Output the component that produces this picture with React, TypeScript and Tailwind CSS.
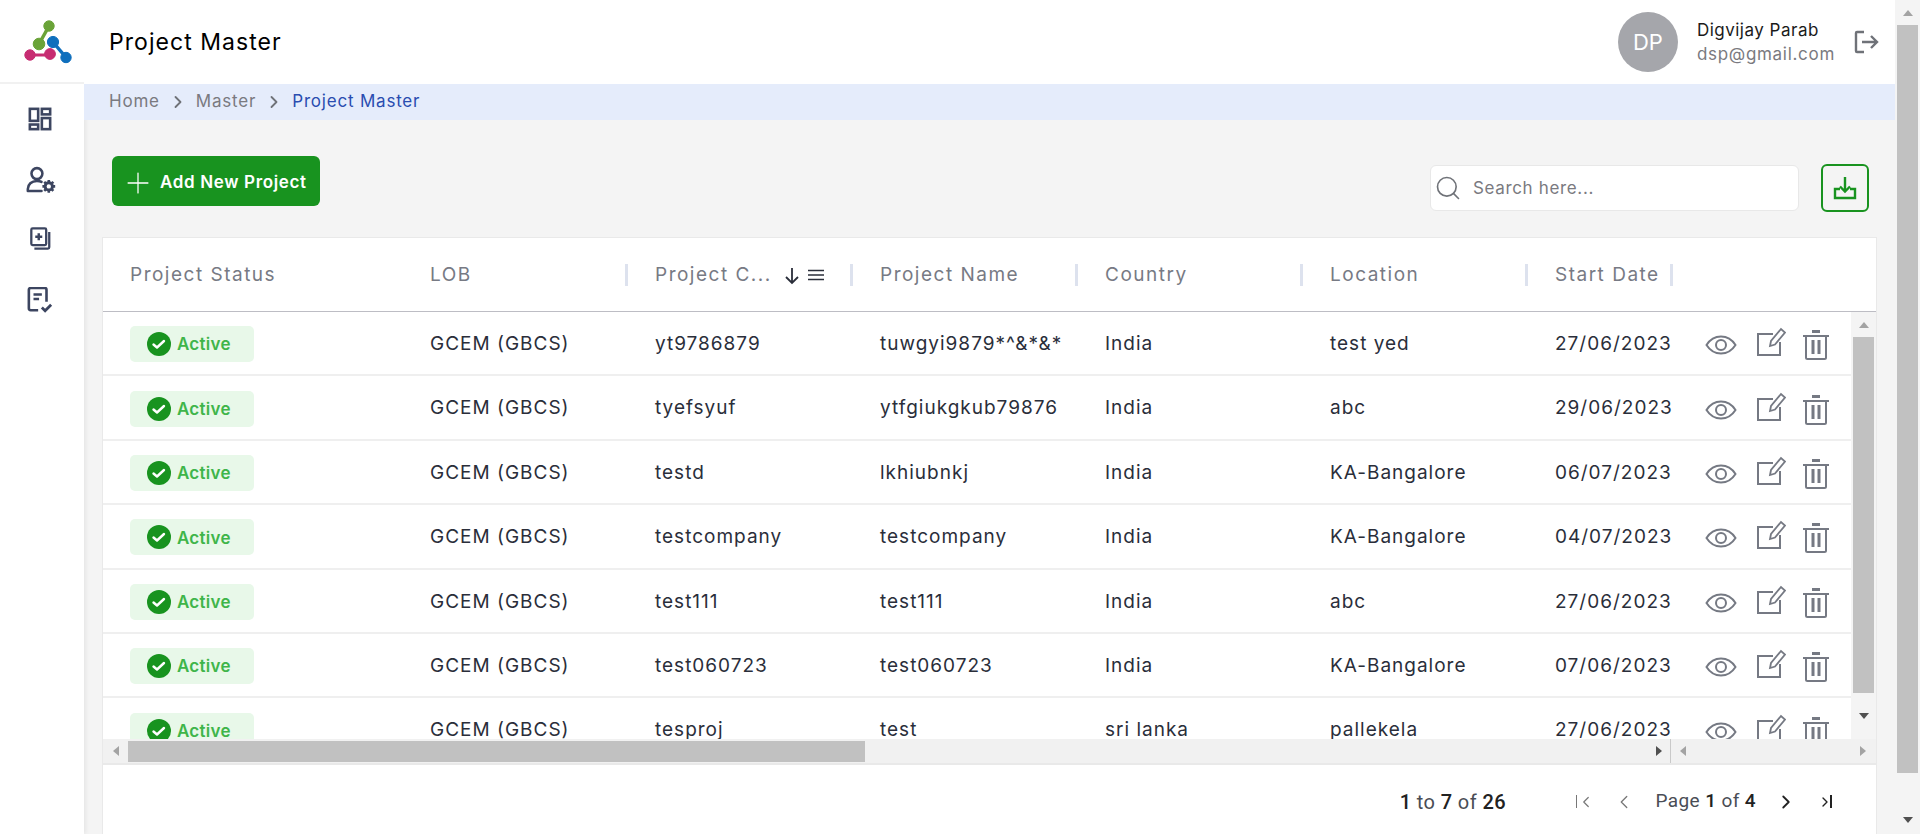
import { ChevronLeft, ChevronRight, Plus, Search } from "lucide-react";

const columns = "grid-cols-[297px_228px_225px_225px_225px_225px_145px_178px]";
const font = "font-['Inter','Noto_Sans',sans-serif]";

const projects = [
  ["yt9786879", "tuwgyi9879*^&*&*", "India", "test yed", "27/06/2023"],
  ["tyefsyuf", "ytfgiukgkub79876", "India", "abc", "29/06/2023"],
  ["testd", "lkhiubnkj", "India", "KA-Bangalore", "06/07/2023"],
  ["testcompany", "testcompany", "India", "KA-Bangalore", "04/07/2023"],
  ["test111", "test111", "India", "abc", "27/06/2023"],
  ["test060723", "test060723", "India", "KA-Bangalore", "07/06/2023"],
  ["tesproj", "test", "sri lanka", "pallekela", "27/06/2023"],
];

function Logo() {
  return (
    <svg width="48" height="44" viewBox="24 20 48 44">
      <g fill="#6aa338" stroke="#6aa338">
        <circle cx="49" cy="26" r="5.2" />
        <circle cx="39" cy="44" r="5.800" />
        <path d="M49 26 39 44" strokeWidth="3.5" />
      </g>
      <g fill="#c72c72" stroke="#c72c72">
        <circle cx="30" cy="55" r="5.200" />
        <circle cx="50" cy="54" r="5.400" />
        <path d="M30 55h20" strokeWidth="3" />
      </g>
      <g fill="#0f6fbd" stroke="#0f6fbd">
        <circle cx="53" cy="42" r="5.600" />
        <circle cx="66" cy="57.500" r="5.200" />
        <path d="M53 42 66 57.500" strokeWidth="3.500" />
      </g>
    </svg>
  );
}

function DashIcon() {
  return (
    <svg width="24" height="24" viewBox="0 0 26 26" fill="none" stroke="#3c4560" strokeWidth="2.800">
      <rect x="2" y="2" width="9" height="13" />
      <rect x="15" y="2" width="9" height="6" />
      <rect x="15" y="12" width="9" height="12" />
      <rect x="2" y="19" width="9" height="5" />
    </svg>
  );
}

function UserGearIcon() {
  return (
    <svg width="31" height="28" viewBox="0 0 34 30" fill="none" stroke="#3c4560" strokeWidth="2.800">
      <circle cx="12" cy="8" r="6" />
      <path d="M2 27v-2c0-5 4-9 10-9 2 0 4 .4 5 1M2 27h15" strokeLinecap="round" />
      <circle cx="25" cy="22" r="4" strokeWidth="3.200" />
      <path d="M25 15v3M25 26v3M18 22h3M29 22h3M20 17l2 2M28 25l2 2M30 17l-2 2M22 25l-2 2" strokeWidth="2.800" />
    </svg>
  );
}

function AddDocIcon() {
  return (
    <svg width="21" height="23" viewBox="0 0 24 26" fill="none" stroke="#3c4560" strokeWidth="2.600">
      <rect x="1.500" y="1.500" width="17" height="19" rx="1.500" />
      <path d="M22 5.500V23a1.500 1.500 0 0 1-1.500 1.500H5" />
      <path d="M10 7v8M6 11h8" strokeWidth="2.800" />
    </svg>
  );
}

function ChecklistIcon() {
  return (
    <svg width="26" height="26" viewBox="0 0 28 28" fill="none" stroke="#3c4560" strokeWidth="2.800">
      <path d="M12 25H4a2 2 0 0 1-2-2V3a2 2 0 0 1 2-2h15a2 2 0 0 1 2 2v13" />
      <path d="M7 8h9M7 13h6" />
      <path d="m16 22 3.500 3.500L26 19" strokeWidth="3" />
    </svg>
  );
}

function LogoutIcon() {
  return (
    <svg width="26" height="24" viewBox="0 0 26 24" fill="none" stroke="#6f7278" strokeWidth="2.400">
      <path d="M10 2H3a1 1 0 0 0-1 1v18a1 1 0 0 0 1 1h7" />
      <path d="M8 12h15M17 6l6 6-6 6" />
    </svg>
  );
}

function DownloadIcon() {
  return (
    <svg width="24" height="24" viewBox="0 0 24 24" fill="none" stroke="#18931f" strokeWidth="2.400">
      <path d="M12 1v14M7 10.500l5 5 5-5" />
      <path d="M7 13H2v9h20v-9h-5" />
    </svg>
  );
}

function ActionIcons() {
  return (
    <div className="flex items-center pl-[32px] pt-[2px]">
      <svg width="32" height="20" viewBox="0 0 32 20" fill="none" stroke="#757983" strokeWidth="2">
        <path d="M1.500 10C5 4.500 10 1.500 16 1.500S27 4.500 30.500 10C27 15.500 22 18.500 16 18.500S5 15.500 1.500 10Z" />
        <circle cx="16" cy="10" r="5" />
      </svg>
      <svg className="ml-[19px] -mt-[6px]" width="30" height="30" viewBox="0 0 30 30" fill="none" stroke="#757983" strokeWidth="2">
        <path d="M17 7H2v21h22V15" />
        <path d="M14 19l1-5L25 2l4 3.500-10 12Z" strokeWidth="1.800" />
      </svg>
      <svg className="ml-[17px]" width="26" height="30" viewBox="0 0 26 30" fill="none" stroke="#757983" strokeWidth="2">
        <path d="M0 6h26" />
        <path d="M9 1.500h8" strokeWidth="3" />
        <path d="M3 6v21.500a1.500 1.500 0 0 0 1.500 1.500h17a1.500 1.500 0 0 0 1.500-1.500V6" />
        <path d="M10 10v14M16 10v14" strokeWidth="3" />
      </svg>
    </div>
  );
}

function StatusPill() {
  return (
    <div className="ml-[27px] flex h-[36px] w-[124px] items-center rounded-[5px] bg-[#e8f8e9] pl-[17px]">
      <svg width="24" height="24" viewBox="0 0 24 24">
        <circle cx="12" cy="12" r="12" fill="#18931f" />
        <path d="m6.500 12.500 3.500 3 7-6.500" fill="none" stroke="#fff" strokeWidth="2.400" strokeLinecap="round" strokeLinejoin="round" />
      </svg>
      <span className="ml-[6px] pt-[2px] text-[17px] font-semibold tracking-[0.25px] text-[#3fb54a]">Active</span>
    </div>
  );
}

function HeaderCell({ label, first, sort }: { label: string; first?: boolean; sort?: boolean }) {
  return (
    <div className={`flex items-center ${first ? "pl-[27px]" : "justify-between"}`}>
      <div className={`flex items-center pt-[2px] ${first ? "" : label === "LOB" ? "pl-[30px]" : "pl-[27px]"}`}>
        <span className="whitespace-nowrap tracking-[1.5px]">{label}</span>
        {sort && (
          <span className="ml-[12px] flex items-center gap-[8px]">
            <svg width="16" height="18" viewBox="0 0 16 18" fill="none" stroke="#2a2e3a" strokeWidth="1.800">
              <path d="M8 1v15M2 10l6 6 6-6" />
            </svg>
            <svg className="-mt-[2px]" width="16" height="12" viewBox="0 0 16 12" fill="none" stroke="#2a2e3a" strokeWidth="1.500">
              <path d="M0 1.500h16M0 6h16M0 10.500h16" />
            </svg>
          </span>
        )}
      </div>
      {!first && <div className="h-[22px] w-[3px] shrink-0 bg-[#dde2ee]" />}
    </div>
  );
}

function Arrow({ dir, color = "#a3a3a3" }: { dir: "up" | "down" | "left" | "right"; color?: string }) {
  const points = { up: "0,6 5,0 10,6", down: "0,0 10,0 5,6", left: "6,0 6,10 0,5", right: "0,0 0,10 6,5" }[dir];
  const horizontal = dir === "left" || dir === "right";
  return (
    <svg width={horizontal ? 6 : 10} height={horizontal ? 10 : 6} viewBox={horizontal ? "0 0 6 10" : "0 0 10 6"}>
      <polygon points={points} fill={color} />
    </svg>
  );
}

export default function App() {
  return (
    <div className={`flex h-screen w-full overflow-hidden bg-[#f4f4f4] ${font}`}>
      <aside className="flex w-[84px] shrink-0 flex-col bg-white shadow-[2px_0_4px_rgba(0,0,0,0.06)]">
        <div className="flex h-[84px] items-center justify-center border-b-2 border-[#f1f1f1] pl-[12px] pt-[1px]">
          <Logo />
        </div>
        <nav className="flex flex-col items-center pr-[4px] pt-[23px]">
          <div className="flex h-[24px] items-center"><DashIcon /></div>
          <div className="ml-[2px] mt-[35px] flex h-[27px] items-center"><UserGearIcon /></div>
          <div className="mt-[34px] flex h-[23px] items-center"><AddDocIcon /></div>
          <div className="mt-[37px] flex h-[25px] items-center"><ChecklistIcon /></div>
        </nav>
      </aside>

      <div className="flex w-[1811px] shrink-0 flex-col">
        <header className="flex h-[84px] shrink-0 items-center justify-between bg-white pl-[25px] pr-[15px]">
          <h1 className="pt-[1px] text-[23px] font-normal tracking-[1.05px] text-black">Project Master</h1>
          <div className="flex items-center">
            <div className="flex h-[60px] w-[60px] items-center justify-center rounded-full bg-[#a5a6ab] text-[22px] text-white">DP</div>
            <div className="ml-[19px] text-[17px] leading-[24px]">
              <div className="tracking-[0.5px] text-[#1b1b1b]">Digvijay Parab</div>
              <div className="tracking-[0.7px] text-[#7a7a80]">dsp@gmail.com</div>
            </div>
            <div className="ml-[19px]"><LogoutIcon /></div>
          </div>
        </header>

        <div className="flex h-[36px] shrink-0 items-center bg-[#e5ecfb] pb-[1px] pl-[25px] text-[17px] tracking-[0.8px] text-[#7a7a80]">
          <span>Home</span>
          <ChevronRight className="mx-[8px]" size={20} strokeWidth={2.2} color="#6f7278" />
          <span>Master</span>
          <ChevronRight className="mx-[8px]" size={20} strokeWidth={2.2} color="#6f7278" />
          <span className="text-[#2a4db0]">Project Master</span>
        </div>

        <main className="flex min-h-0 flex-1 flex-col pl-[18px] pr-[18px]">
          <div className="flex h-[117px] shrink-0 justify-between pl-[10px] pr-[8px]">
            <button className="mt-[36px] flex h-[50px] w-[208px] items-center rounded-[6px] bg-[#18931f] pl-[9px] pt-[4px] text-[17px] font-semibold tracking-[0.65px] text-white">
              <Plus size={34} strokeWidth={0.9} />
              <span className="ml-[5px]">Add New Project</span>
            </button>
            <div className="mt-[44px] flex h-[48px] items-center">
              <div className="flex h-[46px] w-[369px] items-center rounded-[6px] border border-[#e8e8e8] bg-white pl-[3px] text-[17px] tracking-[0.65px] text-[#7a7a80]">
                <Search size={28} strokeWidth={1.4} color="#6f7278" />
                <span className="ml-[11px] pt-[2px]">Search here...</span>
              </div>
              <div className="ml-[22px] flex h-[48px] w-[48px] items-center justify-center rounded-[6px] border-2 border-[#18931f]">
                <DownloadIcon />
              </div>
            </div>
          </div>

          <section className="flex min-h-0 flex-1 flex-col border border-b-0 border-[#e9e9e9] bg-white">
            <div className={`grid h-[74px] shrink-0 ${columns} border-b border-[#bdbdc4] text-[19px] text-[#777a84]`}>
              <HeaderCell label="Project Status" first />
              <HeaderCell label="LOB" />
              <HeaderCell label="Project C..." sort />
              <HeaderCell label="Project Name" />
              <HeaderCell label="Country" />
              <HeaderCell label="Location" />
              <HeaderCell label="Start Date" />
            </div>

            <div className="flex h-[427px] shrink-0">
              <div className="w-[1748px] overflow-hidden">
                {projects.map((p, i) => (
                  <div key={i} className={`grid h-[64.400px] ${columns} items-center border-b-2 border-[#efefef] pt-[2px] text-[19px] tracking-[1px] text-[#2a2e3a]`}>
                    <StatusPill />
                    <div className="pl-[30px]">GCEM (GBCS)</div>
                    <div className="pl-[27px]">{p[0]}</div>
                    <div className="whitespace-nowrap pl-[27px]">{p[1]}</div>
                    <div className="pl-[27px]">{p[2]}</div>
                    <div className="pl-[27px]">{p[3]}</div>
                    <div className="overflow-hidden whitespace-nowrap pl-[27px]">{p[4]}</div>
                    <ActionIcons />
                  </div>
                ))}
              </div>
              <div className="flex w-[25px] flex-col items-center bg-[#f4f4f4]">
                <div className="flex h-[25px] w-full items-center justify-center"><Arrow dir="up" /></div>
                <div className="h-[356px] w-[21px] bg-[#c1c1c1]" />
                <div className="flex flex-1 items-center justify-center"><Arrow dir="down" color="#505050" /></div>
              </div>
            </div>

            <div className="flex h-[26px] shrink-0 items-center border-b-2 border-[#e9e9e9] bg-[#f1f1f1]">
              <div className="flex w-[25px] justify-center"><Arrow dir="left" /></div>
              <div className="h-[21px] w-[737px] bg-[#c1c1c1]" />
              <div className="flex flex-1 justify-end pr-[8px]"><Arrow dir="right" color="#505050" /></div>
              <div className="flex h-full w-[206px] items-center justify-between border-l border-[#c9c9c9] pl-[9px] pr-[10px]">
                <Arrow dir="left" />
                <Arrow dir="right" />
              </div>
            </div>

            <footer className="flex flex-1 items-center justify-end pr-[44px] pt-[4px] font-['Roboto',sans-serif] text-[19px] tracking-[0.4px] text-[#4a4d55]">
              <span className="text-[20px]"><b className="font-medium text-[#222]">1</b> to <b className="font-medium text-[#222]">7</b> of <b className="font-medium text-[#222]">26</b></span>
              <span className="ml-[70px] flex items-center">
                <span className="flex items-center text-[#777]">
                  <span className="h-[13px] w-[1.500px] bg-[#777]" />
                  <ChevronLeft size={18} strokeWidth={1.600} />
                </span>
                <ChevronLeft className="ml-[18px]" size={22} strokeWidth={1.400} color="#777" />
                <span className="ml-[20px]">Page <b className="font-medium text-[#222]">1</b> of <b className="font-medium text-[#222]">4</b></span>
                <ChevronRight className="ml-[19px]" size={22} strokeWidth={2} color="#222" />
                <span className="ml-[20px] flex items-center text-[#222]">
                  <ChevronRight size={16} strokeWidth={2} />
                  <span className="-ml-[3px] h-[13px] w-[2px] bg-[#222]" />
                </span>
              </span>
            </footer>
          </section>
        </main>
      </div>

      <div className="flex flex-1 flex-col items-center">
        <div className="flex h-[25px] items-center"><Arrow dir="up" /></div>
        <div className="h-[748px] w-[21px] bg-[#c1c1c1]" />
        <div className="flex flex-1 items-end pb-[11px]"><Arrow dir="down" color="#505050" /></div>
      </div>
    </div>
  );
}
